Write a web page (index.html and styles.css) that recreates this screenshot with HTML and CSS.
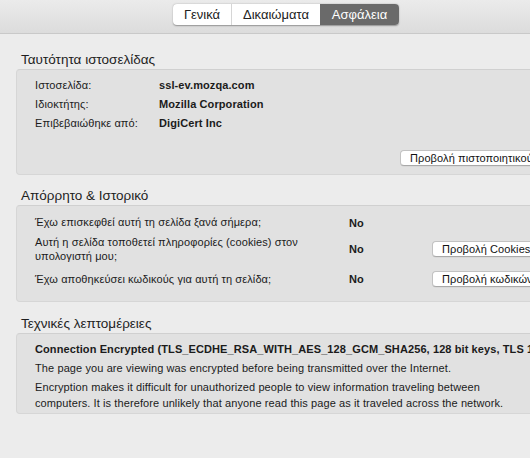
FILE: index.html
```html
<!DOCTYPE html>
<html lang="el">
<head>
<meta charset="utf-8">
<link rel="stylesheet" href="styles.css">
</head>
<body>
<div class="toolbar">
  <div class="tabs">
    <div class="tab t1">Γενικά</div>
    <div class="tab t2">Δικαιώματα</div>
    <div class="tab t3 active">Ασφάλεια</div>
  </div>
</div>
<div class="content">
  <h2 class="title">Ταυτότητα ιστοσελίδας</h2>
  <div class="box box-id">
    <div class="kv"><span class="k">Ιστοσελίδα:</span><span class="v">ssl-ev.mozqa.com</span></div>
    <div class="kv"><span class="k">Ιδιοκτήτης:</span><span class="v">Mozilla Corporation</span></div>
    <div class="kv"><span class="k">Επιβεβαιώθηκε από:</span><span class="v">DigiCert Inc</span></div>
    <div class="btnrow"><button class="btn">Προβολή πιστοποιητικού</button></div>
  </div>

  <h2 class="title t2h">Απόρρητο &amp; Ιστορικό</h2>
  <div class="box box-priv">
    <div class="prow r1"><span class="q">Έχω επισκεφθεί αυτή τη σελίδα ξανά σήμερα;</span><span class="a">No</span><span></span></div>
    <div class="prow r2"><span class="q">Αυτή η σελίδα τοποθετεί πληροφορίες (cookies) στον υπολογιστή μου;</span><span class="a">No</span><button class="btn">Προβολή Cookies</button></div>
    <div class="prow r3"><span class="q">Έχω αποθηκεύσει κωδικούς για αυτή τη σελίδα;</span><span class="a">No</span><button class="btn">Προβολή κωδικών</button></div>
  </div>

  <h2 class="title t3h">Τεχνικές λεπτομέρειες</h2>
  <div class="box box-tech">
    <p class="strong">Connection Encrypted (TLS_ECDHE_RSA_WITH_AES_128_GCM_SHA256, 128 bit keys, TLS 1.2)</p>
    <p class="l2">The page you are viewing was encrypted before being transmitted over the Internet.</p>
    <p class="l3">Encryption makes it difficult for unauthorized people to view information traveling between computers. It is therefore unlikely that anyone read this page as it traveled across the network.</p>
  </div>
</div>
</body>
</html>
```

FILE: styles.css
```css
html, body {
  margin: 0;
  padding: 0;
}
body {
  width: 530px;
  height: 458px;
  overflow: hidden;
  background: #ececec;
  font-family: "Liberation Sans", Arial, sans-serif;
  font-size: 11px;
  letter-spacing: 0.1px;
  color: #1b1b1b;
}
.toolbar {
  height: 33px;
  border-bottom: 1px solid #c9c9c9;
  background: linear-gradient(#ebebeb, #dcdcdc);
  display: flex;
  align-items: flex-start;
  padding-left: 173px;
  box-sizing: content-box;
}
.tabs {
  margin-top: 4px;
  display: flex;
  height: 21px;
  border-radius: 4px;
  background: #fff;
  box-shadow: 0 0.5px 1.5px rgba(0,0,0,0.35);
  overflow: hidden;
}
.tab {
  font-size: 13px;
  letter-spacing: 0;
  line-height: 21px;
  height: 21px;
  text-align: center;
  color: #222;
}
.t1 { width: 58px; border-right: 1px solid #d6d6d6; }
.t2 { width: 88px; }
.t3 { width: 79px; }
.tab.active {
  background: #6a6a6a;
  color: #fff;
}
.content {
  width: 640px;
  padding-left: 16px;
}
.title {
  margin: 18px 0 1px 5px;
  font-size: 13.5px;
  letter-spacing: 0;
  line-height: 16px;
  font-weight: normal;
  color: #1e1e1e;
}
.t2h { margin-top: 13px; }
.t3h { margin-top: 14px; }
.box {
  background: #e1e1e1;
  border: 1px solid #d6d6d6;
  border-top-color: #d0d0d0;
  border-radius: 4px;
  box-sizing: border-box;
}
.box-id {
  height: 106px;
  padding: 6px 0 0 18px;
}
.kv {
  display: flex;
  line-height: 19px;
}
.k { width: 124px; }
.v { font-weight: bold; }
.btnrow {
  margin-top: 17px;
  padding-left: 365px;
  display: flex;
}
.btn {
  font-family: "Liberation Sans", Arial, sans-serif;
  font-size: 11px;
  letter-spacing: 0.1px;
  height: 16px;
  line-height: 14px;
  padding: 0 9px;
  margin: 0;
  background: #fff;
  border: 1px solid #c2c2c2;
  border-bottom-color: #a9a9a9;
  border-radius: 4px;
  color: #111;
  white-space: nowrap;
  width: 150px;
  text-align: left;
  box-shadow: 0 0.5px 0.5px rgba(0,0,0,0.08);
}
.box-priv {
  height: 97px;
  padding: 7px 0 0 18px;
}
.prow {
  display: grid;
  grid-template-columns: 314px 83px auto;
  align-items: center;
}
.q { line-height: 14px; }
.a { font-weight: bold; }
.r1 { height: 19px; }
.r1 .q { line-height: 19px; }
.r2 { height: 28px; margin-top: 3px; }
.r2 .q { width: 300px; }
.r3 { height: 22px; margin-top: 5px; }
.box-tech {
  height: 81px;
  padding: 7px 0 0 18px;
}
.box-tech p {
  margin: 0;
  line-height: 16px;
  white-space: normal;
}
.strong { font-weight: bold; white-space: nowrap !important; }
.l2 { margin-top: 3px !important; }
.l3 { margin-top: 3px !important; width: 475px; }
```
